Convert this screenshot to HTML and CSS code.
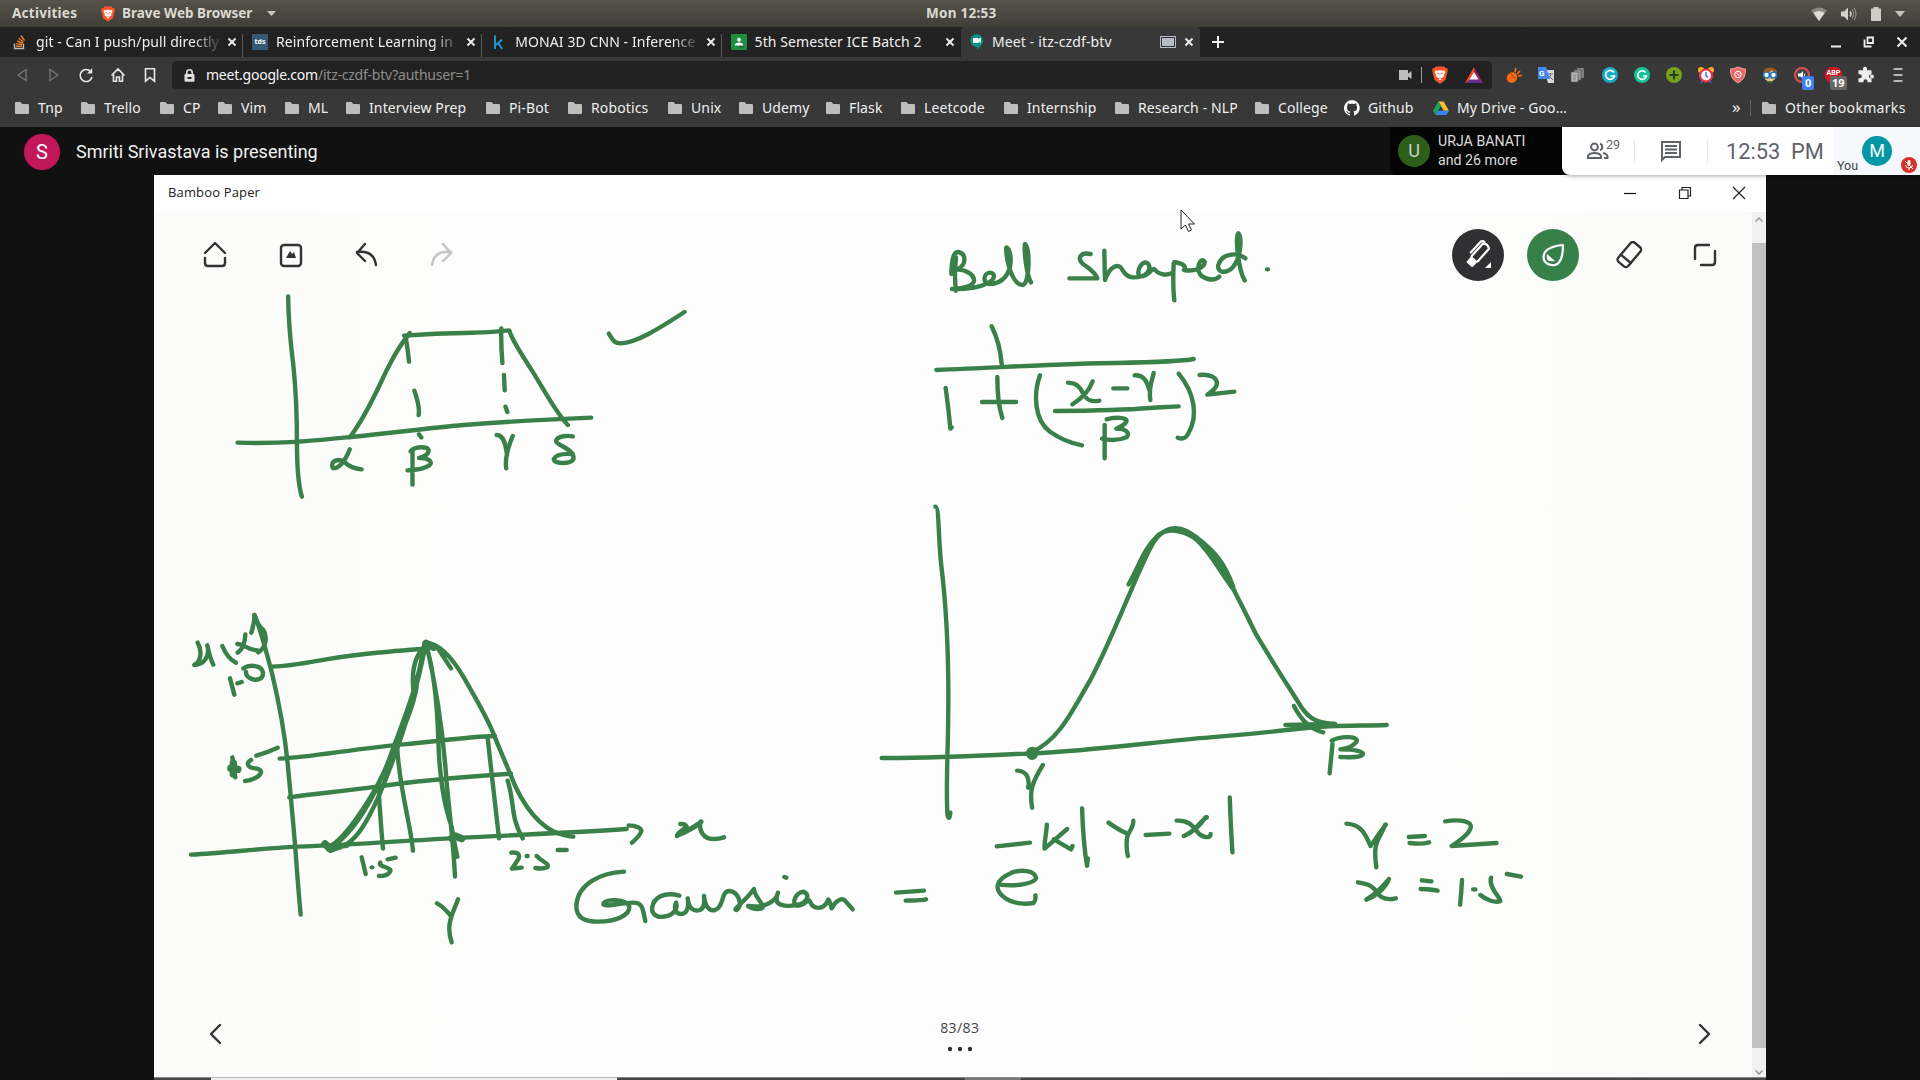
FILE: index.html
```html
<!DOCTYPE html>
<html lang="en">
<head>
<meta charset="utf-8">
<title>Meet - itz-czdf-btv</title>
<link rel="stylesheet" href="styles.css">
</head>
<body>
<svg class="defs" width="0" height="0">
  <symbol id="folder" viewBox="0 0 14 12"><path d="M1 0h4.6l1.6 2H13a1 1 0 0 1 1 1v8a1 1 0 0 1-1 1H1a1 1 0 0 1-1-1V1a1 1 0 0 1 1-1z" fill="#bdbdbd"/></symbol>
  <symbol id="x" viewBox="0 0 10 10"><path d="M1.5 1.5l7 7M8.500 1.500l-7 7" stroke="#f0f0f0" stroke-width="1.900"/></symbol>
  <symbol id="lion" viewBox="0 0 16 18"><path d="M4 .5h8l1.500 1.500 1.800.3.500 2.500-.4 1.700-2 7.500L8 17.700 2.600 14l-2-7.500L.2 4.800l.5-2.500L2.500 2z" fill="#fb542b"/><path d="M3.500 4.500l2 .3L8 4.200l2.500.6 2-.3.700 2-1.700 2.700.5 1.300L9 12.300 8 11.500l-1 .8-3-1.800.5-1.300L2.800 6.500zM6.300 13.200L8 12.300l1.700.9L8 14.600z" fill="#fff"/><path d="M5 7l2 .6M11 7l-2 .6M8 7.500v2.200" stroke="#fb542b" stroke-width=".9"/></symbol>
</svg>

<header class="topbar">
  <span class="activities">Activities</span>
  <svg class="lion-sm" width="14" height="16"><use href="#lion"/></svg>
  <span class="appname">Brave Web Browser</span>
  <svg class="caret" width="9" height="5"><path d="M0 0h9L4.500 5z" fill="#c9c6bd"/></svg>
  <span class="clock">Mon 12:53</span>
  <div class="tray">
    <svg width="16" height="14" viewBox="0 0 16 14"><path d="M0 3.500Q8-2.500 16 3.500L8 14z" fill="#8a877f"/><path d="M2.500 6Q8 2 13.500 6L8 14z" fill="#dedbd4"/></svg>
    <svg width="16" height="14" viewBox="0 0 16 14"><path d="M0 4.500h3L7 .5v13l-4-4H0z" fill="#d5d2cb"/><path d="M9 4.500q2 2.500 0 5" fill="none" stroke="#d5d2cb" stroke-width="1.500"/><path d="M11 2.500q3.300 4.500 0 9M13 1q4 6 0 12" fill="none" stroke="#918e86" stroke-width="1.200"/></svg>
    <svg width="10" height="14" viewBox="0 0 10 14"><path d="M0 1.500h2.500V0h5v1.500H10V14H0z" fill="#d0cdc6"/></svg>
    <svg width="10" height="6" viewBox="0 0 10 6"><path d="M0 0h10L5 6z" fill="#c9c6bd"/></svg>
  </div>
</header>

<nav class="tabs">
  <div class="tab">
    <svg class="fav" width="16" height="16" viewBox="0 0 16 16"><path d="M2.500 9.500v5h9v-5" fill="none" stroke="#b8babd" stroke-width="1.400"/><path d="M4 12.200h6M4.200 9.600l6 1M5 6.800l5.500 2.500M6.700 4.200l4.700 4M9 1.500l3.500 5" stroke="#f48024" stroke-width="1.400"/></svg>
    <span class="ttl fade">git - Can I push/pull directly</span><svg class="cl" width="10" height="10"><use href="#x"/></svg>
  </div>
  <div class="tab">
    <span class="fav tds">tds</span>
    <span class="ttl fade">Reinforcement Learning in</span><svg class="cl" width="10" height="10"><use href="#x"/></svg>
  </div>
  <div class="tab">
    <svg class="fav" width="16" height="16" viewBox="0 0 16 16"><path d="M4 1.500V15M11 5.500L5 11M7.200 9l4 6" fill="none" stroke="#1b96c9" stroke-width="2"/></svg>
    <span class="ttl fade">MONAI 3D CNN - Inference</span><svg class="cl" width="10" height="10"><use href="#x"/></svg>
  </div>
  <div class="tab">
    <svg class="fav" width="16" height="16" viewBox="0 0 16 16"><rect width="16" height="16" rx="1" fill="#1e8e3e"/><circle cx="8" cy="5.700" r="1.900" fill="#fff"/><path d="M3.800 11.500q0-3 4.200-3t4.200 3z" fill="#fff"/><path d="M8 12.800h5" stroke="#155f2a"/></svg>
    <span class="ttl">5th Semester ICE Batch 2</span><svg class="cl" width="10" height="10"><use href="#x"/></svg>
  </div>
  <div class="tab active">
    <svg class="fav" width="16" height="16" viewBox="0 0 16 16"><path d="M6.500 0a6.300 6.300 0 0 1 6.300 6.400c0 3.500-2.500 6.500-5.500 9.100v-2.500A6.300 6.300 0 1 1 6.500 0z" fill="#0b9486"/><path d="M3 4h5.500v1.200L10.800 3.500v5.500L8.500 7.500v1.500H3z" fill="#fff"/></svg>
    <span class="ttl">Meet - itz-czdf-btv</span>
    <svg class="pip" width="16" height="12"><rect x=".5" y=".5" width="15" height="11" fill="none" stroke="#b5bac4"/><rect x="2" y="2" width="12" height="8" fill="#b5bac4"/></svg>
    <svg class="cl" width="10" height="10"><use href="#x"/></svg>
  </div>
  <svg class="plus" width="14" height="14"><path d="M7 1v12M1 7h12" stroke="#f2f2f2" stroke-width="2"/></svg>
  <div class="winctl">
    <svg width="12" height="12"><path d="M1 10.500h10" stroke="#eee" stroke-width="2"/></svg>
    <svg width="12" height="12"><path d="M4.500 1.500h5.500v5.500h-5.500zM1.500 3.500v7h7" fill="none" stroke="#eee" stroke-width="1.800"/></svg>
    <svg width="12" height="12"><path d="M1.500 1.500l9 9M10.500 1.500l-9 9" stroke="#eee" stroke-width="2"/></svg>
  </div>
</nav>

<div class="toolbar">
  <div class="navbtns">
    <svg width="16" height="16" viewBox="0 0 16 16"><path d="M12 2.500v11L4 8z" class="off"/></svg>
    <svg width="16" height="16" viewBox="0 0 16 16"><path d="M4 2.500v11L12 8z" class="off"/></svg>
    <svg width="16" height="16" viewBox="0 0 16 16"><path d="M12.500 4.300A6 6 0 1 0 14 10" class="on"/><path d="M14.200 1v5.500H9" fill="#e8e8e8"/></svg>
    <svg width="16" height="16" viewBox="0 0 16 16"><path d="M1.500 8.500L8 2l6.500 6.500M3.500 7.500v6.700h3V10h3v4.200h3V7.500" class="on"/></svg>
    <svg width="16" height="16" viewBox="0 0 16 16"><path d="M3.500 1.800h9v12.400L8 10.500l-4.500 3.700z" class="on"/></svg>
  </div>
  <div class="address">
    <svg width="11" height="13" viewBox="0 0 11 13"><path d="M2.800 6V3.500a2.700 2.700 0 0 1 5.400 0V6" fill="none" stroke="#ddd" stroke-width="1.600"/><rect x=".5" y="5" width="10" height="7.700" rx="1" fill="#ddd"/><path d="M3.500 8h4v2h-4z" fill="#222"/></svg>
    <span class="url"><b>meet.google.com</b>/itz-czdf-btv?authuser=1</span>
    <svg class="cam" width="13" height="10"><path d="M0 0h9v3.500L12.500 1v8L9 6.500V10H0z" fill="#bdbdbd"/></svg>
    <i class="bar"></i>
    <svg class="shield" width="16" height="18"><use href="#lion"/></svg>
    <svg class="bat" width="18" height="16" viewBox="0 0 18 16"><path d="M9 0L0 16h5l4-7z" fill="#ff4724"/><path d="M0 16h18l-4.500-4H6z" fill="#662d91"/><path d="M9 0l9 16-4.500-3L9 5z" fill="#9e1f63"/><path d="M9 5l4.500 7.500h-9z" fill="#fff"/></svg>
  </div>
  <div class="exts">
    <svg viewBox="0 0 18 18"><ellipse cx="7" cy="11.500" rx="5" ry="5.500" transform="rotate(40 7 11.500)" fill="#ff6a0d"/><path d="M5.500 7l6 6M10 6l1-4M12 8l3-3M13 10l4-.5" stroke="#ff6a0d" stroke-width="1.600"/><path d="M5.500 7.500l5 5" stroke="#383838" stroke-width=".8"/></svg>
    <svg viewBox="0 0 18 18"><path d="M7 4h10v13h-6z" fill="#d7d7d7"/><path d="M1 1h8l4 12H1z" fill="#4486f4"/><path d="M11 8h5M13.500 7v1.500q-.5 3-2.500 4M12 10l4 4" fill="none" stroke="#607080"/><text x="2" y="10" class="gt">G</text></svg>
    <svg viewBox="0 0 18 18"><path d="M8 2h7v10H8z" fill="#7d7d7d"/><path d="M5 4h7v10H5z" fill="#939393" stroke="#555" stroke-width=".6"/><path d="M2 6h7v10H2z" fill="#b1b1b1" stroke="#555" stroke-width=".6"/><path d="M4 9h3M4 11h3M4 13h3" stroke="#888"/></svg>
    <svg viewBox="0 0 18 18"><circle cx="9" cy="9" r="8" fill="#16a9c4"/><path d="M13 6.500A4.500 4.500 0 1 0 13.500 10H9.500" fill="none" stroke="#fff" stroke-width="1.700"/></svg>
    <svg viewBox="0 0 18 18"><circle cx="9" cy="9" r="8" fill="#15c39a"/><path d="M12.500 6.500A4.300 4.300 0 1 0 13.300 10H10" fill="none" stroke="#fff" stroke-width="1.700"/></svg>
    <svg viewBox="0 0 18 18"><circle cx="9" cy="9" r="8" fill="#76a11d"/><path d="M9 4.500v9M4.500 9h9" stroke="#263a0b" stroke-width="2"/></svg>
    <svg viewBox="0 0 18 18"><circle cx="4" cy="4" r="3" fill="#f7b32b"/><circle cx="14" cy="4" r="3" fill="#f7b32b"/><path d="M4 17l2-3M14 17l-2-3" stroke="#3264a8" stroke-width="2"/><circle cx="9" cy="9.500" r="6" fill="#f3f7ff" stroke="#e8334a" stroke-width="2.200"/><path d="M9 6v4l2 1.500" fill="none" stroke="#3264a8" stroke-width="1.300"/></svg>
    <svg viewBox="0 0 18 18"><path d="M9 1q4 2 7.500 2 .5 10-7.500 14Q1 13 1.500 3 5 3 9 1z" fill="#e8696c" stroke="#f2a3a3"/><circle cx="9" cy="8.500" r="3.200" fill="none" stroke="#fff"/><path d="M7 6.500l4 4" stroke="#fff"/></svg>
    <svg viewBox="0 0 18 18"><circle cx="9" cy="9" r="6.500" fill="#f3bd80"/><path d="M2 8q-.5-6 7-6.500Q17 2 16 8q-3-2-5-4-3 3-9 4z" fill="#9a5a16"/><circle cx="5.500" cy="9" r="3" fill="#fff" stroke="#2374bb" stroke-width="1.700"/><circle cx="12.500" cy="9" r="3" fill="#fff" stroke="#2374bb" stroke-width="1.700"/><path d="M5 15q4 3 8 0" fill="#3d8b40"/></svg>
    <span class="ext-badge"><svg viewBox="0 0 18 18"><circle cx="9" cy="9" r="7" fill="#444" stroke="#d95050" stroke-width="2"/><path d="M5 7.500h2.500L10 5v8l-2.500-2.500H5zM11 7q2 2 0 4" fill="#fff"/></svg><em class="blue">0</em></span>
    <span class="ext-badge"><svg viewBox="0 0 18 18"><path d="M5 1h7l5 5v6l-5 5H5L0 12V6z" fill="#cf1822"/><text x="1.500" y="8.500" class="abp">ABP</text></svg><em class="grey">19</em></span>
    <svg viewBox="0 0 18 18"><path d="M2 5h4.500V3.500a2 2 0 0 1 4 0V5H15v4.300h-.5a2 2 0 0 0 0 4H15V17h-4v-1a2 2 0 0 0-4 0v1H2v-4h1.300a2 2 0 0 0 0-4H2z" fill="#eee" transform="translate(-.5 -.7)"/><circle cx="15" cy="10.500" r="1.900" fill="#eee"/></svg>
    <svg viewBox="0 0 18 18"><path d="M4.500 3h9M4.500 9h9M4.500 15h9" stroke="#ddd" stroke-width="1.500"/></svg>
  </div>
</div>

<div class="bookmarks">
  <a><svg><use href="#folder"/></svg>Tnp</a>
  <a><svg><use href="#folder"/></svg>Trello</a>
  <a><svg><use href="#folder"/></svg>CP</a>
  <a><svg><use href="#folder"/></svg>Vim</a>
  <a><svg><use href="#folder"/></svg>ML</a>
  <a><svg><use href="#folder"/></svg>Interview Prep</a>
  <a><svg><use href="#folder"/></svg>Pi-Bot</a>
  <a><svg><use href="#folder"/></svg>Robotics</a>
  <a><svg><use href="#folder"/></svg>Unix</a>
  <a><svg><use href="#folder"/></svg>Udemy</a>
  <a><svg><use href="#folder"/></svg>Flask</a>
  <a><svg><use href="#folder"/></svg>Leetcode</a>
  <a><svg><use href="#folder"/></svg>Internship</a>
  <a><svg><use href="#folder"/></svg>Research - NLP</a>
  <a><svg><use href="#folder"/></svg>College</a>
  <a class="wide"><svg viewBox="0 0 16 16"><path d="M8 0a8 8 0 0 0-2.500 15.600c.4.100.5-.2.500-.4v-1.500c-2.200.5-2.700-1-2.700-1-.4-.9-.9-1.200-.9-1.200-.7-.5.100-.5.100-.5.800.1 1.200.8 1.200.8.700 1.300 1.900.9 2.300.7.100-.5.300-.9.500-1.100-1.800-.2-3.600-.9-3.600-4 0-.9.300-1.600.8-2.100-.1-.2-.4-1 .1-2.100 0 0 .7-.2 2.200.8a7.500 7.500 0 0 1 4 0c1.500-1 2.200-.8 2.200-.8.500 1.100.2 1.900.1 2.100.5.600.8 1.300.8 2.100 0 3.100-1.900 3.700-3.700 4 .3.200.6.700.6 1.500v2.200c0 .2.100.5.500.4A8 8 0 0 0 8 0z" fill="#fff"/></svg>Github</a>
  <a class="wide"><svg viewBox="0 0 16 16"><path d="M5.400 1.500h5.200L16 10.700h-5.200z" fill="#fbc02d"/><path d="M5.400 1.500L0 10.700l2.600 4.300L8 6z" fill="#1da462"/><path d="M5.200 10.700H16L13.400 15H2.600z" fill="#3b83f0"/></svg>My Drive - Goo…</a>
  <span class="more">»</span>
  <i class="sep"></i>
  <a class="other"><svg><use href="#folder"/></svg>Other bookmarks</a>
</div>

<main class="meet">
  <div class="strip">
    <div class="presenter"><span class="avatar pink">S</span><span>Smriti Srivastava is presenting</span></div>
    <div class="people"><span class="avatar green">U</span><div class="names"><span>URJA BANATI</span><span>and 26 more</span></div></div>
    <div class="panel">
      <div class="cell count"><svg width="24" height="24" viewBox="0 0 24 24"><circle cx="8.500" cy="8" r="3.400" class="pp"/><path d="M2 19v-1.800c0-2.200 3.800-3.300 6.500-3.300s6.500 1.100 6.500 3.300V19z" class="pp"/><path d="M14 4.800a3.400 3.400 0 0 1 0 6.400M17 14q4.500 1 4.500 3.500V19H18" class="pp"/></svg><sup>29</sup></div>
      <div class="cell chat"><svg width="22" height="22" viewBox="0 0 22 22"><path d="M2 2h18v15H5l-3 3z" fill="none" stroke="#5f6368" stroke-width="2"/><path d="M5 6h12M5 9.500h12M5 13h12" stroke="#5f6368" stroke-width="1.800"/></svg></div>
      <div class="cell time">12:53&nbsp; PM</div>
      <div class="you"><span class="you-l">You</span><span class="avatar teal">M</span><svg class="mic" width="16" height="16" viewBox="0 0 16 16"><circle cx="8" cy="8" r="8" fill="#d93025"/><rect x="6.500" y="3" width="3" height="6" rx="1.500" fill="#fff"/><path d="M4.500 8q0 3 3.500 3t3.500-3M8 11v2.200M4 4l8 8" fill="none" stroke="#fff"/></svg></div>
    </div>
  </div>

  <section class="window">
    <div class="wtitle"><span>Bamboo Paper</span>
      <div class="wbtns">
        <svg width="14" height="14"><path d="M1 7.500h12" stroke="#111" stroke-width="1.200"/></svg>
        <svg width="14" height="14"><path d="M1.500 4h8.500v8.500H1.500zM4 4V1.500h8.500V10H10" fill="none" stroke="#222" stroke-width="1.200"/></svg>
        <svg width="14" height="14"><path d="M1 1l12 12M13 1L1 13" stroke="#222" stroke-width="1.200"/></svg>
      </div>
    </div>
    <div class="wbody">
      <div class="paper">
        <svg class="ink" viewBox="154 212 1598 866">
          <!-- trapezoid membership sketch -->
          <g transform="translate(150 170) scale(.38265 .33333)">
            <path d="M361 379C362 480 370 540 375 590C382 670 384 740 384 815C384 880 386 940 397 980"/>
            <path d="M229 818C350 822 430 812 525 801C640 788 720 775 820 765C930 755 1040 748 1153 743"/>
            <path d="M523 801C575 720 600 640 628 580C650 530 664 510 679 489"/>
            <path d="M664 497C740 490 800 489 850 488C890 487 910 484 939 481C945 510 970 550 1000 605C1040 680 1065 735 1092 765"/>
            <path d="M668 500Q674 540 677 575M691 662Q706 712 702 735M703 793L709 802M918 475Q917 530 921 579M925 615L927 661M929 710L934 726"/>
            <path d="M1199 491C1212 515 1215 520 1230 520C1275 518 1340 468 1397 426"/>
            <path d="M522 838C510 875 492 898 478 894C468 872 495 862 510 878C522 892 535 896 553 898"/>
            <path d="M686 840V944M681 844C690 830 728 826 728 842C728 854 712 862 703 864C730 862 740 878 730 886C715 898 695 900 673 901"/>
            <path d="M906 795C925 795 930 825 933 855M948 798C938 825 926 860 931 895"/>
            <path d="M1105 799C1090 796 1068 798 1062 810C1055 825 1110 835 1107 866C1103 882 1057 884 1055 867C1060 855 1080 850 1105 852"/>
          </g>
          <!-- bell shaped title and formula -->
          <g transform="translate(850 170) scale(.33333)">
            <path d="M318 262Q312 320 318 362M304 312C305 265 312 245 325 246C350 252 350 285 322 298C350 300 374 315 372 332C370 350 330 355 306 357C350 359 395 350 405 342C440 330 436 308 420 308C400 308 396 342 420 342C460 340 480 310 482 275C483 250 475 232 469 232C467 260 484 345 518 345C540 340 540 235 525 222C522 240 528 310 543 337"/>
            <path d="M722 252C690 245 682 265 697 280C715 295 735 305 742 325H658M763 242Q764 300 765 330C775 300 795 280 812 292C820 305 830 322 850 322C890 322 905 300 895 282C880 265 858 300 868 318C890 325 905 295 912 297C925 312 945 318 965 310M971 280Q968 350 973 391M973 276C1000 280 1010 290 1002 300C1030 305 1066 295 1064 275C1050 258 1035 300 1055 318C1075 330 1095 332 1108 320M1186 265C1160 245 1115 250 1105 285C1100 310 1130 312 1150 290C1175 260 1175 200 1165 190C1155 200 1165 300 1184 331M1251 298h3"/>
            <path d="M425 469Q450 520 455 582M259 600C500 590 650 580 800 579C900 577 990 575 1031 567M287 654Q296 720 301 776L305 772M442 621Q442 700 457 744M396 696H498"/>
            <path d="M570 616C550 670 552 750 600 785C630 806 665 820 696 826M986 611C1035 670 1045 740 1015 790C1008 806 995 808 983 803"/>
            <path d="M654 638C680 640 690 650 698 668C710 692 725 697 748 692M728 634C715 670 680 695 667 703M790 655H832M854 616C885 615 892 640 898 660M911 609C907 630 895 650 901 690M615 723C750 722 850 718 900 714C940 712 960 710 986 709"/>
            <path d="M1049 615C1075 612 1105 620 1100 645C1095 660 1080 668 1072 674L1153 665M764 765V865M770 748C790 742 835 740 829 755C822 768 805 773 799 776C830 776 840 790 830 802C805 812 780 812 756 806"/>
          </g>
          <!-- membership curve with half-height markers -->
          <g transform="translate(150 590) scale(.33333)">
            <path d="M313 75C330 110 350 190 366 250C390 350 405 440 413 520C425 650 435 750 440 830Q446 910 452 974"/>
            <path d="M304 128Q313 100 314 75Q322 105 340 120C355 145 345 175 325 187M327 108Q343 125 343 155"/>
            <path d="M123 794C230 788 330 776 440 770C600 765 750 753 900 745C1100 735 1260 728 1430 717M1436 706C1460 706 1474 715 1474 723C1472 735 1455 750 1446 758"/>
            <path d="M366 230C450 228 520 205 620 195C700 186 760 180 823 177M389 506C480 502 620 475 760 463C860 455 950 440 1035 438M418 622C500 610 580 604 680 590C800 572 950 560 1083 551"/>
            <path d="M535 778C610 735 680 620 735 460C780 340 805 270 823 165M538 770C580 750 640 660 680 590C735 480 790 360 800 290M535 778C610 780 650 700 690 610C740 490 790 350 825 175M790 300C783 230 800 190 828 165M560 765L590 768"/>
            <path d="M828 158C870 160 910 210 940 260C980 330 1010 380 1030 430C1050 480 1055 490 1080 550C1120 660 1180 715 1225 730Q1250 740 1270 740M863 174L903 235"/>
            <path d="M828 165C855 250 862 350 865 450C868 560 880 640 905 710C912 750 917 780 922 800M832 175C860 300 880 430 890 580C900 680 910 760 915 860"/>
            <path d="M686 600Q692 700 699 776M741 465C748 600 780 690 789 782M1013 445Q1030 600 1047 745M1073 572C1095 640 1080 680 1118 745"/>
            <path class="fat" d="M525 762L542 778L560 770M905 745L916 738L935 746M828 160L850 172M250 520V552M243 535L263 538"/>
            <path d="M143 158C158 185 152 215 133 225C165 224 180 195 172 166Q180 205 190 224M217 168Q232 205 258 218M286 133C285 160 275 180 263 188M262 162C280 160 290 180 323 181M240 265L253 314M262 280L275 276M280 235C300 222 336 226 339 248C340 270 318 272 303 266C292 262 288 255 288 246M319 497Q350 488 383 473M303 510C285 520 295 534 315 535C348 538 335 565 285 573M247 502L256 562"/>
            <path d="M635 802L647 852M665 832h2M691 818C680 830 730 832 720 845C715 855 702 858 687 858M713 808L737 803M1084 788C1110 785 1112 800 1100 815L1086 836L1115 833M1130 798h3M1160 798C1175 815 1200 820 1192 832C1180 837 1168 836 1156 834M1223 780H1250M861 940Q880 950 900 975M924 928C912 965 885 1000 905 1057"/>
          </g>
          <!-- bell curve -->
          <g transform="translate(860 490) scale(.35714 .33333)">
            <path d="M211 50C222 50 219 150 228 230C245 380 249 520 247 680C246 800 240 900 245 975Q250 995 253 968"/>
            <path d="M61 804C200 805 340 797 480 790C650 783 850 752 980 742C1100 732 1180 722 1250 714C1330 705 1400 708 1475 705M1191 705L1330 702"/>
            <path d="M482 785C560 750 600 650 645 570C710 440 770 260 815 170C850 100 900 100 950 150C1020 225 1060 330 1110 435C1160 525 1200 590 1235 650C1260 690 1285 700 1330 702"/>
            <path d="M752 283C780 235 790 180 835 135C860 115 900 118 935 143C980 178 1020 270 1048 300M940 140C990 180 1020 215 1045 290M1215 648C1235 690 1260 718 1297 727"/>
            <ellipse class="blob" cx="482" cy="790" rx="17" ry="20"/>
            <path d="M440 842C470 843 475 870 471 893M512 825C480 880 474 905 482 953M1323 762L1315 850M1321 752C1350 735 1400 740 1390 755C1380 770 1360 776 1345 778C1390 778 1410 785 1408 793C1400 806 1360 801 1345 801"/>
          </g>
          <!-- Gaussian = -->
          <g transform="translate(550 780) scale(.33333)">
            <path d="M222 275C150 280 85 310 79 375C78 415 105 425 145 425C200 424 240 405 238 380C232 355 160 355 160 373C170 382 210 368 250 368C280 368 278 390 286 423"/>
            <path d="M388 347C345 335 310 350 306 385C306 410 330 415 355 407C375 400 384 380 378 368C372 380 375 402 393 402C415 402 416 375 413 355C416 385 430 396 450 390C468 380 462 360 462 348C465 375 475 395 495 390C525 380 510 332 540 333C565 337 580 375 560 390C545 390 580 370 612 327C612 350 650 380 635 385C615 392 590 378 595 378C650 385 680 360 684 338C670 370 690 380 725 377C770 375 785 345 760 335C735 340 725 370 740 377C765 380 775 350 780 365C790 390 820 390 833 363C835 350 840 370 845 385C855 365 875 350 885 362L908 388M703 291L709 293M1038 338L1122 332M1067 362C1090 361 1110 362 1128 358M391 132C415 130 412 150 400 158L381 168M410 140L385 160M454 125C435 145 390 165 381 166M418 148Q450 128 452 125C445 150 460 178 490 177Q508 177 522 172"/>
          </g>
          <!-- exponent and sample values -->
          <g transform="translate(960 790) scale(.38265 .33333)">
            <path d="M96 169L183 158M227 104C226 130 220 155 221 176L280 117M245 148L290 178L294 168M319 55Q322 160 332 227L334 205M388 98Q415 120 435 130M453 92C453 120 435 128 436 150Q434 180 439 198M485 135L547 131M566 92C600 90 610 110 620 125C630 142 655 148 655 132M642 82C625 110 605 130 585 138M645 82C625 95 620 120 585 138M705 22Q708 120 712 187"/>
            <path d="M105 284C150 290 195 280 199 264C195 240 160 238 135 248C90 270 90 300 115 322C140 345 180 342 192 339Q199 330 197 316M1010 101C1050 103 1060 135 1073 168M1111 104C1095 155 1078 150 1088 232M1113 104Q1095 130 1078 160M1173 141L1215 138M1175 159C1195 162 1215 161 1226 157M1268 94C1300 88 1345 90 1333 118C1325 140 1300 155 1285 168L1402 159M1040 277C1070 282 1080 290 1090 307C1102 330 1120 330 1139 325M1121 267C1110 300 1080 322 1062 329M1119 270Q1090 310 1064 327M1207 271L1232 274M1204 297Q1230 297 1248 302M1312 270Q1310 310 1307 344M1341 298h6M1388 263C1380 290 1410 320 1412 333C1400 340 1375 330 1360 315M1429 252L1466 260"/>
          </g>
        </svg>
        <div class="ptools">
          <svg class="ti" viewBox="-14 -14 28 28"><path d="M-10-2L0-12 10-2M-10 3V8q0 3 3 3H7q3 0 3-3V3"/></svg>
          <svg class="ti" viewBox="-14 -14 28 28"><rect x="-10" y="-10" width="20" height="21" rx="3"/><path d="M-5 3L-1-4 1-1 3-3 5 3z" fill="#333" stroke="none"/></svg>
          <svg class="ti" viewBox="-14 -14 28 28"><path d="M-1-11L-9-2-1 6M-9-3Q8-5 10 10"/></svg>
          <svg class="ti faint" viewBox="-14 -14 28 28"><path d="M1-11L9-2 1 6M9-3Q-8-5-10 10"/></svg>
          <span class="fill"></span>
          <span class="round dark"><svg viewBox="-26 -26 52 52"><g transform="rotate(42)"><path d="M-4-12Q0-15 4-12V5L0 9-4 5z"/><path d="M-7 3V-12M-4-14Q-7-14-7-10"/><path d="M-3 7L0 6 3 7 3 12-3 12z" fill="#fff"/></g><path d="M7 13h6V7z" fill="#fff" stroke="none"/></svg></span>
          <span class="round leaf"><svg viewBox="-26 -26 52 52"><path d="M10-10Q-3-9-8-3Q-12 5-5 9Q4 13 8 4Q10-1 10-10z"/><path d="M-6-1Q-8 8 2 6z" fill="#fff" stroke="none"/></svg></span>
          <svg class="ti" viewBox="-14 -14 28 28"><g transform="rotate(40)"><rect x="-6.500" y="-13" width="13" height="25" rx="3"/><path d="M-6.500 5h13"/></g></svg>
          <svg class="ti" viewBox="-14 -14 28 28"><path d="M-10 4V-7q0-3 3-3H4M10-4V7q0 3-3 3H-4"/></svg>
        </div>
        <div class="pager">
          <svg class="ti" viewBox="-14 -14 28 28"><path d="M5-9L-4 0 5 9"/></svg>
          <div class="pg"><span>83/83</span><svg width="26" height="6"><circle cx="3" cy="3" r="2.200"/><circle cx="13" cy="3" r="2.200"/><circle cx="23" cy="3" r="2.200"/></svg></div>
          <svg class="ti" viewBox="-14 -14 28 28"><path d="M-5-9L4 0-5 9"/></svg>
        </div>
        <svg class="cursor" width="16" height="24" viewBox="0 0 16 24"><path d="M1 1v19l4.500-4 3 6.500 3-1.500-3-6H14.500z" fill="#fff" stroke="#222"/></svg>
      </div>
      <div class="scroll">
        <svg width="8" height="5"><path d="M.5 4.500L4 1l3.500 3.500" fill="none" stroke="#999" stroke-width="1.500"/></svg>
        <i class="thumb"></i>
        <svg width="8" height="5"><path d="M.5.500L4 4 7.500.500" fill="none" stroke="#999" stroke-width="1.500"/></svg>
      </div>
    </div>
    <div class="taskedge"><i></i><i></i><i></i><i></i><i></i></div>
  </section>
</main>
</body>
</html>
```
FILE: styles.css
```css
* { box-sizing: border-box; }
body {
  margin: 0; width: 1920px; height: 1080px; overflow: hidden;
  display: flex; flex-direction: column;
  background: #111; color: #f0f0f0;
  font: 14px/1 "Noto Sans", "Open Sans", sans-serif;
}
svg { flex: none; display: block; }
.defs { position: absolute; }

.topbar {
  height: 27px; flex: none; display: grid; align-items: center;
  grid-template-columns: 89px 21px 145px 659px 1fr auto;
  padding: 0 15px 0 12px;
  background: linear-gradient(#57534a, #403e38);
  color: #dcd9d1; font-weight: 700; font-size: 13.5px;
}
.activities, .clock { letter-spacing: .25px; }
.tray { display: flex; align-items: center; gap: 14px; }

.tabs { height: 30px; flex: none; display: flex; align-items: center; background: #222; }
.tab {
  width: 239.300px; height: 30px; flex: none; display: flex; align-items: center;
  padding: 0 6px 0 9px; position: relative; white-space: nowrap; letter-spacing: .08px;
}
.tab:first-child { width: 243px; padding-left: 12px; }
.tab:not(.active)::after {
  content: ""; position: absolute; right: 0; top: 7px; bottom: 0; width: 1px; background: #5a5a5a;
}
.tab:nth-child(4)::after { display: none; }
.tab.active { background: #383838; border-radius: 4px 4px 0 0; letter-spacing: .15px; }
.tab.active .ttl { margin-left: -2px; }
.fav { width: 16px; height: 16px; margin-right: 8px; flex: none; }
.tds { background: #355876; color: #fff; font-size: 7px; font-weight: 700; text-align: center; line-height: 15px; }
.ttl { flex: 1; overflow: hidden; line-height: 22px; }
.fade { -webkit-mask-image: linear-gradient(90deg, #000 86%, transparent 102%); mask-image: linear-gradient(90deg, #000 86%, transparent 102%); }
.cl { margin-left: 8px; }
.plus { margin-left: 11px; }
.winctl { margin-left: auto; display: flex; gap: 21px; padding-right: 12px; }

.toolbar { height: 38px; flex: none; display: flex; align-items: center; background: #383838; padding: 0 6px 2px 0; }
.navbtns { width: 172px; display: flex; gap: 16px; padding-left: 14px; }
.off { fill: none; stroke: #767676; stroke-width: 1.300; }
.on { fill: none; stroke: #e8e8e8; stroke-width: 1.600; }
.address {
  width: 1320px; height: 28px; border-radius: 4px; background: #222;
  display: flex; align-items: center; padding: 0 9px 0 12px;
}
.url { margin-left: 11px; flex: 1; color: #8d8d8d; letter-spacing: -.23px; }
.url b { font-weight: 400; color: #f5f5f5; }
.bar { width: 1px; height: 16px; background: #999; margin: 0 10px 0 9px; }
.bat { margin-left: 17px; }
.exts { flex: 1; display: flex; justify-content: space-between; padding: 0 7px 0 13px; }
.exts svg { width: 18px; height: 18px; }
.ext-badge { position: relative; }
.ext-badge em {
  position: absolute; left: 9px; top: 10px; font: 700 11px/14px "Noto Sans", sans-serif;
  padding: 0 3px; border-radius: 2px; color: #fff;
}
.ext-badge .blue { background: #3b82f6; }
.ext-badge .grey { background: #666; padding: 0 2px; left: 5px; }
.gt { font: 700 8px Roboto, sans-serif; fill: #fff; }
.abp { font: 700 7px Roboto, sans-serif; fill: #fff; }

.bookmarks {
  height: 32px; flex: none; display: grid; align-items: center; background: #383838;
  padding: 0 0 6px 15px; white-space: nowrap; letter-spacing: .12px;
  grid-template-columns: 66px 79px 58px 67px 61px 140px 82px 100px 71px 87px 75px 103px 111px 140px 89px 89px 299px 18px 12px 1fr;
}
.bookmarks a { display: flex; align-items: center; gap: 9px; }
.bookmarks svg { width: 14px; height: 12px; }
.bookmarks .wide { gap: 8px; }
.bookmarks .wide svg { width: 16px; height: 16px; }
.bookmarks .other { letter-spacing: .32px; }
.sep { width: 1px; height: 16px; background: #5f5f5f; }
.more { font-size: 17px; line-height: 14px; padding-bottom: 3px; }

.meet { flex: 1; display: flex; flex-direction: column; font-family: Roboto, sans-serif; }
.strip { height: 48px; flex: none; display: flex; position: relative; }
.presenter { width: 1390px; padding: 1px 0 0 24px; display: flex; align-items: center; gap: 16px; font-size: 18px; }
.avatar { border-radius: 50%; display: flex; align-items: center; justify-content: center; flex: none; color: #fff; }
.pink { width: 36px; height: 36px; background: #c2185b; font-size: 20px; }
.green { width: 32px; height: 32px; background: #2d5f1b; font-size: 18px; color: #cfcfcf; }
.teal { width: 30px; height: 30px; background: #0097a7; font-size: 18px; }
.people {
  width: 180px; margin-right: -8px; background: #050505; border-radius: 0 0 0 8px;
  display: flex; align-items: center; gap: 8px; padding-left: 8px; color: #dcdcdc;
}
.names { display: flex; flex-direction: column; gap: 4px; font-size: 14.200px; margin-top: -1px; }
.panel { flex: 1; display: flex; align-items: center; background: #fff; border-radius: 0 0 0 8px; color: #5f6368; box-shadow: 0 1px 4px #0005; }
.cell { height: 24px; display: flex; align-items: center; border-right: 1px solid #e6e8ea; }
.count { width: 73px; padding-left: 24px; }
.count sup { font-size: 12.5px; margin: -12px 0 0 -4px; }
.pp { fill: none; stroke: #5f6368; stroke-width: 2; }
.chat { width: 73px; padding-left: 25px; }
.time { width: 126px; padding: 2px 0 0 18px; font-size: 21.800px; border: 0; }
.you { position: relative; flex: 1; height: 48px; background: #f5f8fc; display: flex; align-items: center; gap: 4px; padding-left: 3px; }
.you-l { align-self: flex-end; font-size: 12.500px; color: #444; padding-bottom: 3px; }
.mic { position: absolute; right: 3px; bottom: 2px; }

.window { width: 1612px; flex: 1; margin-left: 154px; display: flex; flex-direction: column; background: #fff; color: #222; }
.wtitle {
  height: 37px; display: flex; align-items: center; justify-content: space-between;
  padding: 0 20px 2px 14px; font: 13px/1 "Open Sans", sans-serif; letter-spacing: .15px;
}
.wbtns { display: flex; gap: 40.500px; }
.wbody { flex: 1; display: flex; }
.paper { width: 1598px; position: relative; display: flex; flex-direction: column; justify-content: space-between; background: linear-gradient(90deg, #fbfbf9, #fdfdfd 30%, #fdfdfd 70%, #fbfbf9); }
.ink { position: absolute; left: 0; top: 0; width: 1598px; height: 866px; }
.ink path { fill: none; stroke: #3a8049; stroke-width: 4.400; stroke-linecap: round; stroke-linejoin: round; vector-effect: non-scaling-stroke; }
.ink .fat { stroke-width: 7.500; }
.ink .blob { fill: #3a8049; }
.ptools { position: relative; display: flex; align-items: center; padding: 17px 33.500px 0 47px; gap: 47.600px; }
.ti { width: 28px; height: 28px; fill: none; stroke: #333; stroke-width: 2.400; stroke-linecap: round; stroke-linejoin: round; }
.faint { stroke: #c4c4c4; }
.fill { flex: 1; }
.round { width: 52px; height: 52px; border-radius: 50%; margin-right: -24px; }
.round.leaf { margin-right: -12px; }
.round svg { fill: none; stroke: #fff; stroke-width: 2.200; stroke-linejoin: round; stroke-linecap: round; }
.dark { background: #303032; }
.leaf { background: #37804a; }
.pager { position: relative; display: flex; align-items: center; justify-content: space-between; padding: 0 33px 25.500px 46.500px; }
.pg { display: flex; flex-direction: column; align-items: center; gap: 11px; padding-top: 4px; font: 14px/1 "Open Sans", sans-serif; letter-spacing: .4px; color: #444; }
.pg svg { fill: #333; }
.cursor { position: absolute; left: 1026px; top: -3px; }
.scroll { width: 14px; background: #f0f0f0; display: flex; flex-direction: column; align-items: center; padding: 5px 0 2px; }
.thumb { width: 14px; flex: 1; background: #c1c1c1; margin: 21px 0 22px; }
.taskedge { height: 3px; display: grid; grid-template-columns: 57px 406px 348px 56px 1fr; }
.taskedge i { background: #484446; border-top: 1px solid #888; }
.taskedge i:nth-child(2) { background: #eee; border-color: #bbb; }
.taskedge i:nth-child(4) { background: #777; }
```
